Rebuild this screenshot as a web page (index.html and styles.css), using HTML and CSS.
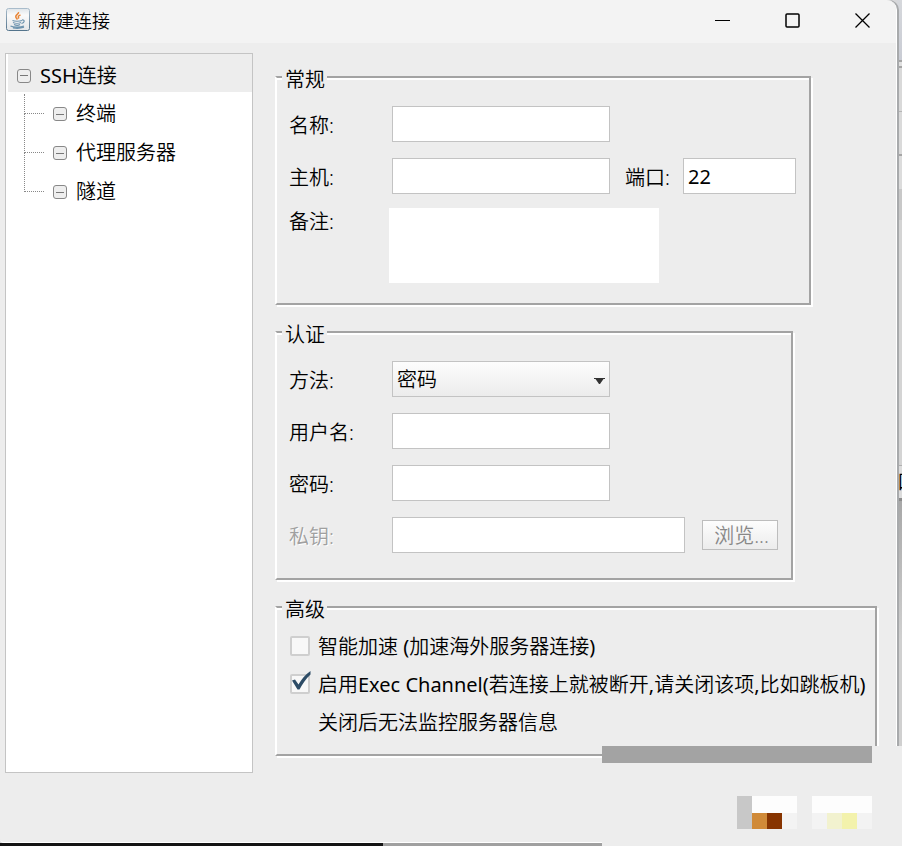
FILE: index.html
```html
<!DOCTYPE html>
<html lang="zh-CN">
<head>
	<meta charset="utf-8">
	<title>新建连接</title>
	<meta name="viewport" content="width=device-width,initial-scale=1.0">
	<link rel="stylesheet" href="styles.css">
</head>
<body>
	<div class="desktop">
		<div class="window">
			<header class="titlebar">
				<svg class="app-icon" width="26" height="26" viewBox="0 0 26 26">
					<defs>
						<linearGradient id="tile" x1="0" y1="0" x2="0" y2="1">
							<stop offset="0" stop-color="#dfe5e9"/>
							<stop offset="0.3" stop-color="#fafafa"/>
							<stop offset="1" stop-color="#e4e6e8"/>
						</linearGradient>
						<linearGradient id="edge" x1="0" y1="0" x2="0" y2="1">
							<stop offset="0" stop-color="#a9bccb"/>
							<stop offset="1" stop-color="#54748c"/>
						</linearGradient>
					</defs>
					<rect x="1.5" y="1.5" width="23" height="22" rx="2" fill="url(#tile)" stroke="url(#edge)"/>
					<path d="M13.5 5c1 2-4 3-2.500 5.500l1.500 2M15.500 8c-3 1-2.500 2-1.500 3.500" fill="none" stroke="#e8873a" stroke-width="1.500"/>
					<path d="M7.500 13.500c2 1 7 1 9.500 0M8 15.500c2 1 6 1 8 0M9 17.500c2 1 4.500 1 6 0M17 13c3-.5 3 2.500-.5 3.500M5.500 19c3 1.500 10 1.500 13.500 0M8 21c4 .6 8 .3 11-.8" fill="none" stroke="#6d93ae" stroke-width="1.200"/>
				</svg>
				<h1>新建连接</h1>
				<div class="controls">
					<button type="button" aria-label="最小化"><svg width="16" height="16" viewBox="0 0 16 16"><path d="M0 7.500h15"/></svg></button>
					<button type="button" aria-label="最大化"><svg width="16" height="16" viewBox="0 0 16 16"><rect x="1" y="1" width="13" height="13" rx="1" stroke-width="1.500"/></svg></button>
					<button type="button" aria-label="关闭"><svg width="16" height="16" viewBox="0 0 16 16"><path d="M.5.5l14 14M14.500.5l-14 14" stroke-width="1.300"/></svg></button>
				</div>
			</header>

			<div class="content">
				<nav class="tree">
					<div class="node selected"><span class="toggle"></span><span class="latin">SSH</span>连接</div>
					<ul>
						<li class="node"><span class="toggle"></span>终端</li>
						<li class="node"><span class="toggle"></span>代理服务器</li>
						<li class="node"><span class="toggle"></span>隧道</li>
					</ul>
				</nav>

				<form class="settings">
					<fieldset>
						<legend>常规</legend>
						<div class="row">
							<label for="name">名称:</label>
							<input type="text" id="name">
						</div>
						<div class="row">
							<label for="host">主机:</label>
							<input type="text" id="host">
							<label class="port-label" for="port">端口:</label>
							<input type="text" class="port" id="port" value="22">
						</div>
						<div class="row memo">
							<label for="memo">备注:</label>
							<textarea id="memo"></textarea>
						</div>
					</fieldset>

					<fieldset class="auth">
						<legend>认证</legend>
						<div class="row">
							<label for="method">方法:</label>
							<div class="select">
								<select id="method">
									<option>密码</option>
								</select>
								<svg width="11" height="6" viewBox="0 0 11 6"><path d="M0 0h11v1H9.500L6 6H5L1.500 1H0z" fill="#333"/></svg>
							</div>
						</div>
						<div class="row">
							<label for="user">用户名:</label>
							<input type="text" id="user">
						</div>
						<div class="row">
							<label for="pass">密码:</label>
							<input type="password" id="pass">
						</div>
						<div class="row">
							<label class="off" for="key">私钥:</label>
							<input type="text" class="key" id="key" disabled>
							<button type="button" class="browse" disabled>浏览...</button>
						</div>
					</fieldset>

					<fieldset class="advanced">
						<legend>高级</legend>
						<div class="check">
							<input type="checkbox" id="boost">
							<label for="boost">智能加速<span class="latin"> (</span>加速海外服务器连接<span class="latin">)</span></label>
						</div>
						<div class="check">
							<input type="checkbox" id="exec" checked>
							<label for="exec">启用<span class="latin">Exec Channel(</span>若连接上就被断开<span class="latin">,</span>请关闭该项<span class="latin">,</span>比如跳板机<span class="latin">)</span></label>
							<svg class="tick" width="22" height="22" viewBox="0 0 22 22"><path d="M2 9.500l3-1 3.500 5C11.500 8 15 4 20.500 0v3.500C15.500 8 12.500 13 9.500 18.500H7.500z" fill="#2d4c66"/></svg>
						</div>
						<p class="check note">关闭后无法监控服务器信息</p>
					</fieldset>
				</form>
			</div>
		</div>
		<div class="behind"><span>口</span></div>
	</div>
	<div class="ground"></div>

	<!-- blocks over the bottom right corner -->
	<div class="patch">
		<div class="bar"></div>
		<div class="actions">
			<button type="button" aria-label="确定">
				<svg width="60" height="33" viewBox="0 0 60 33" shape-rendering="crispEdges">
					<path d="M0 0h15v33H0z" fill="#c8c8c8"/>
					<path d="M15 0h45v17H15z" fill="#fdfdfd"/>
					<path d="M15 17h15v16H15z" fill="#d08a38"/>
					<path d="M30 17h15v16H30z" fill="#873400"/>
					<path d="M45 17h15v16H45z" fill="#f3f3f3"/>
				</svg>
			</button>
			<button type="button" aria-label="取消">
				<svg width="60" height="33" viewBox="0 0 60 33" shape-rendering="crispEdges">
					<path d="M0 0h60v17H0z" fill="#fdfdfd"/>
					<path d="M0 17h60v16H0z" fill="#f3f3f3"/>
					<path d="M15 17h15v16H15z" fill="#f2f2cf"/>
					<path d="M30 17h15v16H30z" fill="#f3f2ac"/>
				</svg>
			</button>
		</div>
	</div>
</body>
</html>
```
FILE: styles.css
```css
* {
	box-sizing: border-box;
}
body {
	margin: 0;
	min-height: 100vh;
	position: relative;
	display: flex;
	flex-direction: column;
	background: #ededed;
	color: #000;
	font: 350 20px/22px "Noto Sans", "Noto Sans CJK SC", sans-serif;
}
button, input, select, textarea {
	font: inherit;
	color: inherit;
	margin: 0;
	padding: 0;
}
.latin, .row input {
	font-weight: 400;
}
.desktop {
	flex: 1;
	display: flex;
	background: #d8d8da;
}
.window {
	flex: 1;
	min-width: 0;
	background: #ededed;
	border-right: 1px solid #fff;
	border-bottom: 1px solid #fff;
	border-radius: 0 10px 0 4px;
	box-shadow: 2px 0 0 #a8aaac;
	z-index: 1;
}

/* title bar */
.titlebar {
	display: flex;
	align-items: center;
	height: 43px;
	padding-left: 5px;
	background: #f3f3f3;
	border-radius: 0 10px 0 0;
}
.titlebar h1 {
	flex: 1;
	margin: 0 0 0 7px;
	padding-bottom: 2px;
	font-size: 18px;
	font-weight: inherit;
}
.app-icon {
	margin-bottom: 4px;
}
.controls {
	display: flex;
	padding-bottom: 2px;
	margin-right: -2px;
}
.controls button {
	width: 70px;
	height: 40px;
	border: 0;
	background: none;
}
.controls svg {
	display: block;
	margin: auto;
	fill: none;
	stroke: #000;
}

.content {
	display: flex;
	align-items: flex-start;
	gap: 22px;
	padding: 10px 19px 69px 5px;
}

/* connection tree */
.tree {
	width: 248px;
	height: 720px;
	flex: none;
	padding-left: 2px;
	border: 1px solid #c4c4c4;
	background: #fff;
}
.tree ul {
	list-style: none;
	margin: 0;
	padding: 0;
}
.node {
	position: relative;
	display: flex;
	align-items: center;
	height: 39px;
	padding: 5px 0 0 9px;
}
.node.selected {
	height: 38px;
	background: #ededed;
}
li.node {
	padding-left: 45px;
}
li.node:before {
	content: "";
	position: absolute;
	left: 16px;
	top: -18px;
	width: 19px;
	height: 39px;
	border: dotted #888;
	border-width: 0 0 1px 1px;
}
li.node:first-child:before {
	top: 2px;
	height: 19px;
}
.toggle {
	width: 14px;
	height: 14px;
	margin-right: 9px;
	border: 1px solid #888;
	border-radius: 3px;
	background: linear-gradient(#777, #777) center / 8px 1px no-repeat, #eee;
}

/* form */
.settings {
	flex: 1;
	min-width: 0;
	display: flex;
	flex-direction: column;
	align-items: flex-start;
	gap: 13px;
	padding-top: 10px;
}
fieldset {
	min-width: 0;
	margin: 0;
	padding: 15px 13px 20px 12px;
	border: 2px solid #a3a3a3;
	border-left-color: #fff;
	box-shadow: 2px 2px 0 #fff, inset 0 2px 0 #fff;
}
fieldset.auth {
	padding-bottom: 25px;
}
fieldset.advanced {
	align-self: stretch;
	padding: 6px 0 13px 13px;
}
legend {
	margin-left: -7px;
	padding: 6px 2px 0 3px;
	background: #ededed;
}
.advanced legend {
	margin-left: -8px;
}
.row {
	display: flex;
	align-items: center;
	margin-top: 16px;
}
legend + .row {
	margin-top: 0;
}
.row label {
	width: 103px;
	padding-top: 3px;
}
.row .port-label {
	width: 58px;
	margin-left: 15px;
}
.row.memo {
	align-items: flex-start;
	margin-top: 14px;
}
.row.memo label {
	width: 100px;
}
.row .off {
	color: #a0a0a0;
	text-shadow: 1px 1px 0 #fff;
}
.row input, .select {
	width: 218px;
	height: 36px;
	padding: 0 4px;
	border: 1px solid #c3c3c3;
	background: #fff;
}
.row .port {
	width: 113px;
}
.row .key {
	width: 293px;
}
textarea {
	display: block;
	width: 270px;
	height: 75px;
	border: 0;
	background: #fff;
	resize: none;
}
.select {
	position: relative;
	background: linear-gradient(#fdfdfd, #ececec);
}
.select select {
	width: 100%;
	height: 100%;
	padding-top: 2px;
	border: 0;
	background: none;
	appearance: none;
}
.select svg {
	position: absolute;
	right: 4px;
	top: 16px;
	pointer-events: none;
}
.browse {
	width: 76px;
	height: 30px;
	margin-left: 17px;
	padding: 2px 0 0 3px;
	border: 1px solid #bdbdbd;
	background: linear-gradient(#fdfdfd, #ececec);
	color: #888;
	white-space: nowrap;
}

/* tick boxes */
.check {
	position: relative;
	display: flex;
	align-items: center;
	gap: 8px;
	height: 38px;
	margin: 0;
	white-space: nowrap;
}
.check label, .note {
	padding-top: 2px;
}
.check input {
	appearance: none;
	width: 20px;
	height: 20px;
	border: 2px solid #cfcfcf;
	border-radius: 2px;
	background: #f8f8f8;
}
.tick {
	position: absolute;
	left: 0;
	top: 6px;
	pointer-events: none;
}
.note {
	padding-left: 28px;
}

/* other windows showing past the edges */
.behind {
	width: 5px;
	overflow: hidden;
	padding-top: 471px;
	background: linear-gradient(#d6d8dc 0, #c9ccd4 60px, #a5a5a5 60px, #a5a5a5 62px, #e0e0e0 62px, #e0e0e0 66px, #a5a5a5 66px, #a5a5a5 68px, #d9d9d9 68px, #d9d9d9 111px, #b5b5b5 111px, #b5b5b5 112px, #dadada 112px, #dadada 154px, #a5a5a5 154px, #a5a5a5 156px, #dcdcdc 156px, #dcdcdc 189px, #c8c8c8 189px, #c8c8c8 220px, #d4d4d4 220px, #d4d4d4 465px, #b0b0b0 465px, #b0b0b0 466px, #dcdcdc 466px, #dcdcdc 498px, #8c8c8c 498px, #8c8c8c 501px, #a8a8a8 501px, #d0d0d0 640px);
}
.behind span {
	display: block;
}
.ground {
	height: 3px;
	background: linear-gradient(90deg, #141414 383px, #a0a0a0 383px);
}

.patch {
	position: absolute;
	right: 0;
	bottom: 0;
	z-index: 2;
	width: 300px;
	height: 100px;
	padding-right: 30px;
	background: #ededed;
}
.bar {
	height: 17px;
	background: #a3a3a3;
}
.actions {
	display: flex;
	justify-content: flex-end;
	gap: 15px;
	padding-top: 33px;
}
.actions button {
	width: 60px;
	height: 33px;
	border: 0;
	background: none;
}
.actions svg {
	display: block;
}
```
